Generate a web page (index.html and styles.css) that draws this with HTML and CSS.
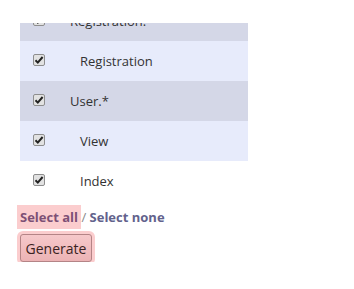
FILE: index.html
```html
<!DOCTYPE html>
<html lang="en">
<head>
  <meta charset="UTF-8">
  <meta name="viewport" content="width=device-width, initial-scale=1.0">
  <title>Generate</title>
  <link rel="stylesheet" href="styles.css">
</head>
<body>
  <div class="crop">
    <table class="files">
      <tr class="odd">
        <td class="check"><input type="checkbox" checked></td>
        <td class="name">Registration.*</td>
      </tr>
      <tr class="even">
        <td class="check"><input type="checkbox" checked></td>
        <td class="name child">Registration</td>
      </tr>
      <tr class="odd">
        <td class="check"><input type="checkbox" checked></td>
        <td class="name">User.*</td>
      </tr>
      <tr class="even">
        <td class="check"><input type="checkbox" checked></td>
        <td class="name child">View</td>
      </tr>
      <tr class="plain">
        <td class="check"><input type="checkbox" checked></td>
        <td class="name child">Index</td>
      </tr>
    </table>
  </div>

  <div class="select-links">
    <a href="#" class="select-all hl">Select all</a> <span class="sep">/</span> <a href="#" class="select-none">Select none</a>
  </div>

  <div class="buttons">
    <button type="button" class="hl">Generate</button>
  </div>
</body>
</html>
```

FILE: styles.css
```css
body {
  font-family: "Open Sans", Arial, sans-serif;
  font-size: 13px;
  color: #333;
  background: #fff;
  margin: 0;
}
.crop {
  margin-top: 23px;
  overflow: hidden;
}
.files {
  border-collapse: collapse;
  width: 228px;
  margin: -22px 0 0 20px;
}
.files td {
  height: 40px;
  padding: 0;
  vertical-align: middle;
}
.files tr.odd {
  background-color: #d4d7e7;
}
.files tr.even {
  background-color: #e7ebfb;
}
.files tr.plain {
  background-color: #fff;
}
.check {
  width: 37px;
  padding-left: 13px !important;
}
.check input {
  appearance: none;
  -webkit-appearance: none;
  display: block;
  width: 12px;
  height: 12px;
  margin: -2px 0 0 0;
  border: 1px solid #8e8e8e;
  border-radius: 2px;
  background: #e2e2e2 url("data:image/svg+xml,%3Csvg xmlns='http://www.w3.org/2000/svg' width='12' height='12' viewBox='0 0 12 12'%3E%3Cpath d='M2.5 6.3 L4.8 8.6 L9.6 3' fill='none' stroke='%23222' stroke-width='2'/%3E%3C/svg%3E") no-repeat center;
}
.name.child {
  padding-left: 10px;
}
.select-links {
  margin: 8px 0 0 20px;
  line-height: 17px;
  font-weight: bold;
}
.select-links a {
  text-decoration: none;
}
.select-all {
  color: #7d5075;
}
.select-none {
  color: #62628c;
}
.sep {
  color: #888;
  font-weight: normal;
}
.hl {
  background-color: #fbcdce;
  box-shadow: 0 0 0 3px #fbcdce;
}
.buttons {
  margin: 8px 0 0 20px;
}
button {
  font-family: "Open Sans", Arial, sans-serif;
  font-size: 14px;
  color: #3a2222;
  height: 28px;
  width: 72px;
  padding: 0;
  border: 1px solid #b48486;
  border-radius: 3px;
  background: linear-gradient(#f6c8ca, #ecb3b5);
  box-shadow: 0 0 0 3px #fbcdce;
}
```
